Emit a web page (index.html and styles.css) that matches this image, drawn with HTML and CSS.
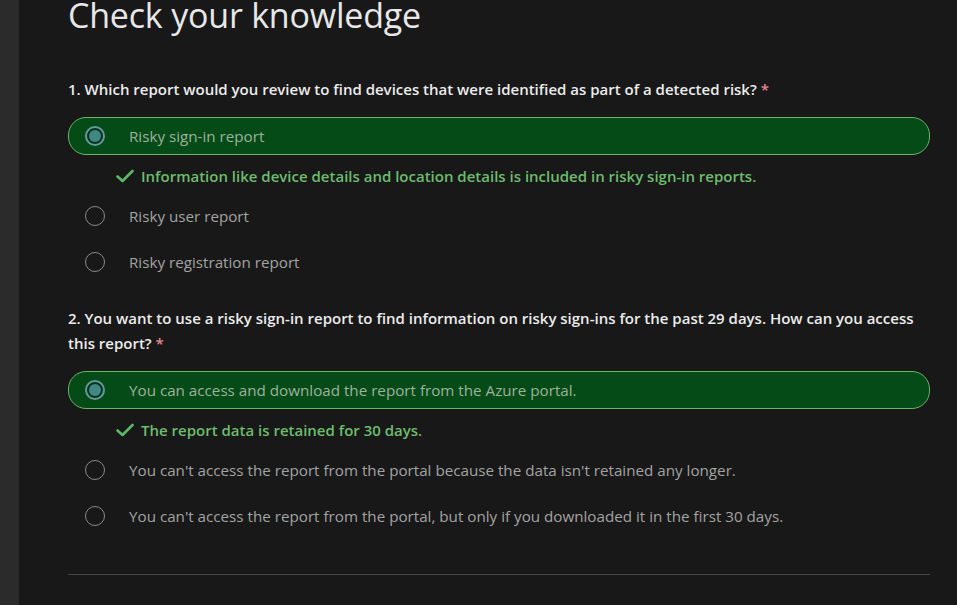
FILE: index.html
```html
<!DOCTYPE html>
<html lang="en">
<head>
<meta charset="utf-8">
<title>Check your knowledge</title>
<link rel="stylesheet" href="styles.css">
</head>
<body>
<div class="layout">
  <aside class="strip"></aside>
  <main class="content">
    <h1 class="title">Check your knowledge</h1>

    <section class="question">
      <p class="prompt">1. Which report would you review to find devices that were identified as part of a detected risk? <span class="req">*</span></p>
      <div class="options">
        <div class="option selected">
          <span class="radio checked"></span>
          <span class="label">Risky sign-in report</span>
        </div>
        <div class="feedback">
          <svg class="check" viewBox="0 0 18 14" width="18" height="14"><path d="M1.5 7.5 L6.5 12 L16.5 2" fill="none" stroke="currentColor" stroke-width="2.6" stroke-linecap="round" stroke-linejoin="round"/></svg>
          <span>Information like device details and location details is included in risky sign-in reports.</span>
        </div>
        <div class="option">
          <span class="radio"></span>
          <span class="label">Risky user report</span>
        </div>
        <div class="option">
          <span class="radio"></span>
          <span class="label">Risky registration report</span>
        </div>
      </div>
    </section>

    <section class="question">
      <p class="prompt">2. You want to use a risky sign-in report to find information on risky sign-ins for the past 29 days. How can you access this report? <span class="req">*</span></p>
      <div class="options">
        <div class="option selected">
          <span class="radio checked"></span>
          <span class="label">You can access and download the report from the Azure portal.</span>
        </div>
        <div class="feedback">
          <svg class="check" viewBox="0 0 18 14" width="18" height="14"><path d="M1.5 7.5 L6.5 12 L16.5 2" fill="none" stroke="currentColor" stroke-width="2.6" stroke-linecap="round" stroke-linejoin="round"/></svg>
          <span>The report data is retained for 30 days.</span>
        </div>
        <div class="option">
          <span class="radio"></span>
          <span class="label">You can't access the report from the portal because the data isn't retained any longer.</span>
        </div>
        <div class="option">
          <span class="radio"></span>
          <span class="label">You can't access the report from the portal, but only if you downloaded it in the first 30 days.</span>
        </div>
      </div>
    </section>

    <hr class="divider">
  </main>
</div>
</body>
</html>
```

FILE: styles.css
```css
html, body {
  margin: 0;
  padding: 0;
  background: #181818;
  height: 100%;
  overflow: hidden;
}

body {
  font-family: "Open Sans", "Noto Sans", "Liberation Sans", sans-serif;
  color: #e6e6e6;
}

.layout {
  display: flex;
  min-height: 605px;
}

.strip {
  width: 19px;
  flex: none;
  background: #2b2b2b;
}

.content {
  flex: 1;
  padding: 0 27px 0 49px;
}

.title {
  margin: -7px 0 0 0;
  font-size: 34px;
  line-height: 44px;
  font-weight: 400;
  color: #e8e8e8;
  letter-spacing: -0.2px;
}

.question {
  margin-top: 40px;
}

.question + .question {
  margin-top: 25px;
}

.prompt {
  margin: 0;
  font-size: 15px;
  line-height: 25px;
  font-weight: 600;
  color: #ececec;
}

.req {
  color: #e48a8a;
}

.options {
  margin-top: 15px;
  display: flex;
  flex-direction: column;
  gap: 8px;
}

.option {
  display: flex;
  align-items: center;
  height: 38px;
  box-sizing: border-box;
  padding-left: 16px;
  border: 1px solid transparent;
  border-radius: 18px;
  font-size: 15.2px;
  color: #a3a3a3;
}

.option.selected {
  background: #054b17;
  border-color: #69b567;
  color: #9db29c;
}

.radio {
  width: 20px;
  height: 20px;
  box-sizing: border-box;
  border: 1.5px solid #8a8a8a;
  border-radius: 50%;
  flex: none;
  margin-right: 24px;
  position: relative;
}

.radio.checked {
  border: 2px solid #5f9d9b;
  background: #10301f;
}

.radio.checked::after {
  content: "";
  position: absolute;
  left: 2px;
  top: 2px;
  width: 12px;
  height: 12px;
  border-radius: 50%;
  background: #3f8985;
}

.feedback {
  display: flex;
  align-items: center;
  height: 26px;
  padding-left: 48px;
  font-size: 15px;
  font-weight: 600;
  color: #6cbd6e;
}

.check {
  color: #5bb867;
  margin-right: 7px;
  flex: none;
}

.divider {
  margin: 39px 0 0 0;
  border: 0;
  border-top: 1px solid #464646;
  height: 0;
}
```
